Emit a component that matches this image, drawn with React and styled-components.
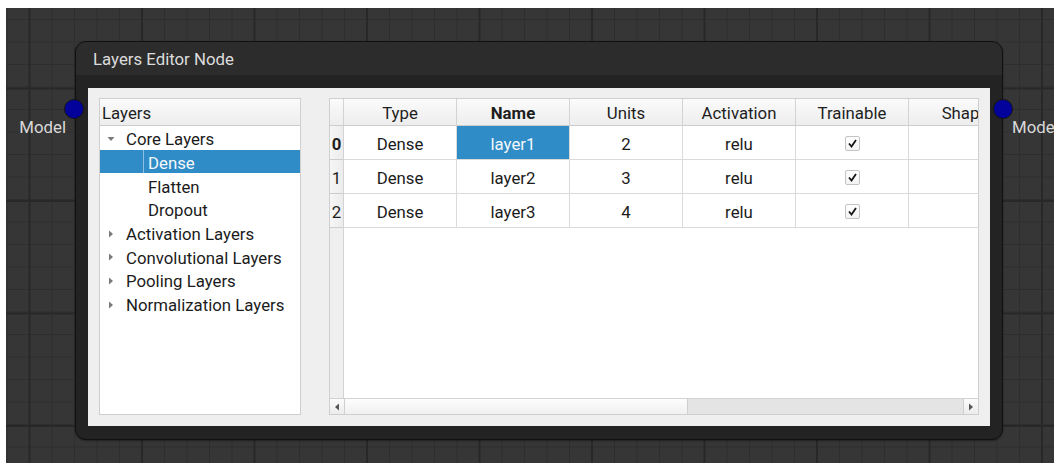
import React from "react";
import styled, { createGlobalStyle } from "styled-components";

const GlobalStyle = createGlobalStyle`
  html, body {
    margin: 0;
    background: #ffffff;
  }
  body {
    font-family: Roboto, "Noto Sans", "Liberation Sans", sans-serif;
    font-size: 16.8px;
  }
`;

const Canvas = styled.div`
  position: relative;
  margin: 8px 0 0 6px;
  width: 1048px;
  height: 455px;
  overflow: hidden;
  background-color: #363636;
  background-image:
    linear-gradient(to right, #282828 2px, transparent 2px),
    linear-gradient(to bottom, #282828 2px, transparent 2px),
    linear-gradient(to right, #2e2e2e 1px, transparent 1px),
    linear-gradient(to bottom, #2e2e2e 1px, transparent 1px);
  background-size: 112.5px 112.5px, 112.5px 112.5px, 22.5px 22.5px, 22.5px 22.5px;
  background-position: 22.5px 0, 0 79.5px, 0.5px 0, 0 11px;
`;

const Node = styled.div`
  position: absolute;
  left: 69px;
  top: 33px;
  width: 928px;
  height: 399px;
  box-sizing: border-box;
  border: 1px solid #101010;
  border-radius: 11px;
  background: #232323;
  display: flex;
  flex-direction: column;
  box-shadow: 0 1px 2px rgba(0, 0, 0, 0.4);
`;

const NodeHeader = styled.div`
  height: 33px;
  flex: none;
  display: flex;
  align-items: center;
  padding-left: 17px;
  background: #2c2c2c;
  border-radius: 10px 10px 0 0;
  color: #dcdcdc;
`;

const NodeBody = styled.div`
  flex: 1;
  display: flex;
  padding: 13px 12px;
  min-height: 0;
`;

const Port = styled.div`
  position: absolute;
  top: 57px;
  left: ${(p) => (p.$side === "left" ? "-12px" : "917px")};
  width: 20px;
  height: 20px;
  box-sizing: border-box;
  border-radius: 50%;
  border: 1px solid #141414;
  background: #03039c;
`;

const PortLabel = styled.span`
  position: absolute;
  top: 17px;
  ${(p) => (p.$side === "left" ? "right: 17px;" : "left: 18px;")}
  line-height: 20px;
  color: #d9d9d9;
  white-space: nowrap;
`;

const Panel = styled.div`
  flex: 1;
  display: flex;
  gap: 28px;
  padding: 10px 11px 11px 11px;
  background: #efefef;
  min-width: 0;
`;

/* ---- tree ---- */

const Tree = styled.div`
  width: 202px;
  flex: none;
  box-sizing: border-box;
  border: 1px solid #cfcfcf;
  background: #ffffff;
  display: flex;
  flex-direction: column;
`;

const HeaderCell = styled.div`
  box-sizing: border-box;
  height: 27px;
  display: flex;
  align-items: center;
  justify-content: ${(p) => (p.$left ? "flex-start" : "center")};
  padding: ${(p) => (p.$left ? "2px 0 0 2px" : "2px 4px 0")};
  background: linear-gradient(to bottom, #fbfbfb, #ededed);
  border-bottom: 1px solid #cdcdcd;
  border-right: ${(p) => (p.$left ? "none" : "1px solid #d3d3d3")};
  color: #1e1e1e;
  font-weight: ${(p) => (p.$bold ? 700 : 400)};
  white-space: nowrap;
  overflow: hidden;
  flex: none;
`;

const TreeRow = styled.div`
  height: 23.7px;
  display: flex;
  align-items: stretch;
  background: ${(p) => (p.$selected ? "#308cc6" : "transparent")};
  color: ${(p) => (p.$selected ? "#f4f8fb" : "#1b1b1b")};
  padding-left: ${(p) => p.$depth * 22}px;
  white-space: nowrap;
`;

const Branch = styled.span`
  width: 22px;
  flex: none;
  display: flex;
  align-items: center;
  justify-content: center;
  padding-top: 2px;
`;

const TreeLabel = styled.span`
  display: flex;
  align-items: center;
  padding: 3px 0 0 4px;
  border-left: 1px solid ${(p) => (p.$selected ? "rgba(255,255,255,0.45)" : "transparent")};
  margin-left: -1px;
`;

const Arrow = ({ open }) => (
  <svg width="8" height="8" viewBox="0 0 8 8">
    {open ? (
      <path d="M0.5 2 L7.5 2 L4 6 Z" fill="#7a7a7a" />
    ) : (
      <path d="M2 0.5 L6 4 L2 7.5 Z" fill="#7a7a7a" />
    )}
  </svg>
);

/* ---- table ---- */

const Table = styled.div`
  flex: 1;
  min-width: 0;
  box-sizing: border-box;
  border: 1px solid #cfcfcf;
  display: grid;
  grid-template-columns: 14px 1fr;
  grid-template-rows: 27px 1fr 16px;
  background: #efefef;
`;

const Corner = styled.div`
  background: linear-gradient(to bottom, #fbfbfb, #ededed);
  border-bottom: 1px solid #cdcdcd;
  border-right: 1px solid #d3d3d3;
  box-sizing: border-box;
`;

const HHeader = styled.div`
  display: flex;
  overflow: hidden;
`;

const Col = styled(HeaderCell)`
  width: 113px;
  flex: none;
`;

const VHeader = styled.div`
  display: flex;
  flex-direction: column;
  border-right: 1px solid #d3d3d3;
  box-sizing: border-box;
`;

const RowHead = styled.div`
  height: 34px;
  box-sizing: border-box;
  display: flex;
  align-items: center;
  justify-content: center;
  padding-top: 2px;
  background: linear-gradient(to right, #f6f6f6, #ececec);
  border-bottom: 1px solid #cdcdcd;
  font-weight: ${(p) => (p.$bold ? 700 : 400)};
  color: #1e1e1e;
`;

const Cells = styled.div`
  background: #ffffff;
  overflow: hidden;
`;

const Row = styled.div`
  display: flex;
  height: 34px;
`;

const Cell = styled.div`
  width: 113px;
  flex: none;
  box-sizing: border-box;
  display: flex;
  align-items: center;
  justify-content: center;
  padding-top: 2px;
  border-right: 1px solid #dadada;
  border-bottom: 1px solid #dadada;
  background: ${(p) => (p.$selected ? "#308cc6" : "transparent")};
  color: ${(p) => (p.$selected ? "#f4f8fb" : "#1b1b1b")};
`;

const Check = styled.span`
  width: 15px;
  height: 15px;
  box-sizing: border-box;
  border: 1px solid #c4c4c4;
  border-radius: 2px;
  background: linear-gradient(to bottom, #ffffff, #f3f3f3);
  display: flex;
  align-items: center;
  justify-content: center;
`;

const Scrollbar = styled.div`
  grid-column: 1 / span 2;
  display: flex;
  background: #e4e4e4;
  border-top: 1px solid #d3d3d3;
  box-sizing: border-box;
`;

const ScrollButton = styled.div`
  width: 15px;
  flex: none;
  display: flex;
  align-items: center;
  justify-content: center;
  background: linear-gradient(to bottom, #fbfbfb, #ececec);
  border-right: ${(p) => (p.$end ? "none" : "1px solid #cfcfcf")};
  border-left: ${(p) => (p.$end ? "1px solid #cfcfcf" : "none")};
  box-sizing: border-box;
`;

const ScrollTrack = styled.div`
  flex: 1;
  display: flex;
`;

const ScrollHandle = styled.div`
  width: 343px;
  box-sizing: border-box;
  background: linear-gradient(to bottom, #fdfdfd, #f0f0f0);
  border-right: 1px solid #cfcfcf;
`;

const tree = [
  { label: "Core Layers", open: true, children: ["Dense", "Flatten", "Dropout"] },
  { label: "Activation Layers" },
  { label: "Convolutional Layers" },
  { label: "Pooling Layers" },
  { label: "Normalization Layers" },
];

const columns = ["Type", "Name", "Units", "Activation", "Trainable", "Shape"];

const layers = [
  { type: "Dense", name: "layer1", units: 2, activation: "relu", trainable: true },
  { type: "Dense", name: "layer2", units: 3, activation: "relu", trainable: true },
  { type: "Dense", name: "layer3", units: 4, activation: "relu", trainable: true },
];

const CheckMark = () => (
  <svg width="11" height="11" viewBox="0 0 11 11">
    <path d="M2 5.5 L4.5 8.5 L9 2" fill="none" stroke="#151515" strokeWidth="1.8" />
  </svg>
);

const LayerTree = () => (
  <Tree>
    <HeaderCell $left>Layers</HeaderCell>
    {tree.map((group) => (
      <React.Fragment key={group.label}>
        <TreeRow $depth={0}>
          <Branch>
            <Arrow open={group.open} />
          </Branch>
          <TreeLabel>{group.label}</TreeLabel>
        </TreeRow>
        {group.open &&
          group.children.map((child, i) => (
            <TreeRow key={child} $depth={1} $selected={i === 0}>
              <Branch />
              <TreeLabel $selected={i === 0}>{child}</TreeLabel>
            </TreeRow>
          ))}
      </React.Fragment>
    ))}
  </Tree>
);

const LayerTable = () => (
  <Table>
    <Corner />
    <HHeader>
      {columns.map((c) => (
        <Col key={c} $bold={c === "Name"}>
          {c}
        </Col>
      ))}
    </HHeader>
    <VHeader>
      {layers.map((l, i) => (
        <RowHead key={l.name} $bold={i === 0}>
          {i}
        </RowHead>
      ))}
    </VHeader>
    <Cells>
      {layers.map((l, i) => (
        <Row key={l.name}>
          <Cell>{l.type}</Cell>
          <Cell $selected={i === 0}>{l.name}</Cell>
          <Cell>{l.units}</Cell>
          <Cell>{l.activation}</Cell>
          <Cell>
            {l.trainable && (
              <Check>
                <CheckMark />
              </Check>
            )}
          </Cell>
          <Cell />
        </Row>
      ))}
    </Cells>
    <Scrollbar>
      <ScrollButton>
        <svg width="6" height="8" viewBox="0 0 6 8">
          <path d="M5 0.5 L1 4 L5 7.5 Z" fill="#555" />
        </svg>
      </ScrollButton>
      <ScrollTrack>
        <ScrollHandle />
      </ScrollTrack>
      <ScrollButton $end>
        <svg width="6" height="8" viewBox="0 0 6 8">
          <path d="M1 0.5 L5 4 L1 7.5 Z" fill="#555" />
        </svg>
      </ScrollButton>
    </Scrollbar>
  </Table>
);

export default function App() {
  return (
    <>
      <GlobalStyle />
      <Canvas>
        <Node>
          <NodeHeader>Layers Editor Node</NodeHeader>
          <NodeBody>
            <Panel>
              <LayerTree />
              <LayerTable />
            </Panel>
          </NodeBody>
          <Port $side="left">
            <PortLabel $side="left">Model</PortLabel>
          </Port>
          <Port $side="right">
            <PortLabel $side="right">Model</PortLabel>
          </Port>
        </Node>
      </Canvas>
    </>
  );
}
